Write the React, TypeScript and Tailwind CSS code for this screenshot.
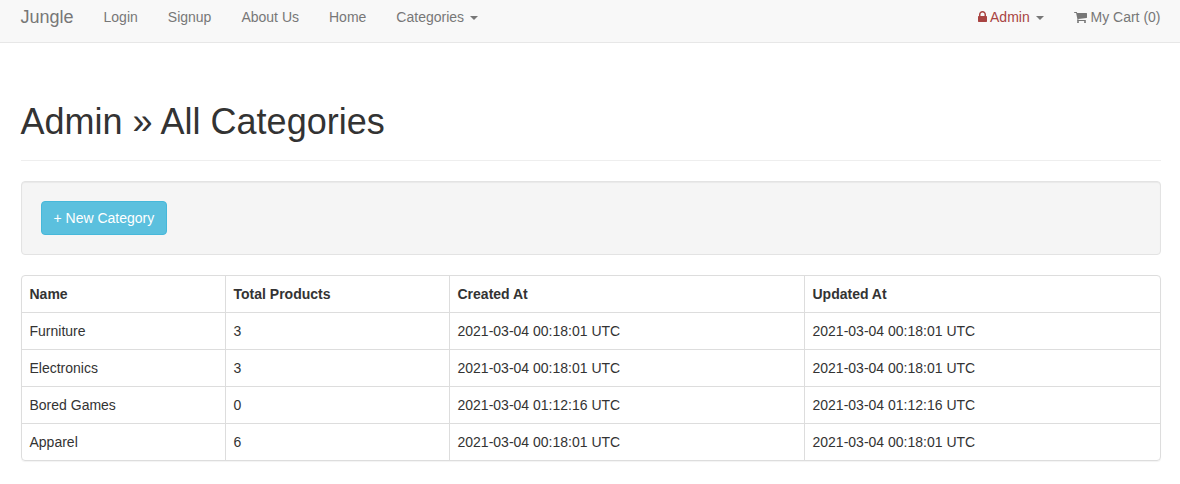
const rows = [
  ["Furniture", "3", "2021-03-04 00:18:01 UTC", "2021-03-04 00:18:01 UTC"],
  ["Electronics", "3", "2021-03-04 00:18:01 UTC", "2021-03-04 00:18:01 UTC"],
  ["Bored Games", "0", "2021-03-04 01:12:16 UTC", "2021-03-04 01:12:16 UTC"],
  ["Apparel", "6", "2021-03-04 00:18:01 UTC", "2021-03-04 00:18:01 UTC"],
];
const headers = ["Name", "Total Products", "Created At", "Updated At"];
const links = ["Login", "Signup", "About Us", "Home"];

function Caret() {
  return <span className="ml-0.5 inline-block border-x-4 border-t-4 border-x-transparent border-t-[#777] align-middle" />;
}

function LockIcon() {
  return (
    <svg viewBox="0 0 1152 1792" className="inline-block h-[14px] w-[9px] align-[-2px]" fill="currentColor">
      <path
        transform="matrix(1 0 0 -1 0 1536)"
        d="M320 768h512v192q0 106 -75 181t-181 75t-181 -75t-75 -181v-192zM1152 672v-576q0 -40 -28 -68t-68 -28h-960q-40 0 -68 28t-28 68v576q0 40 28 68t68 28h32v192q0 184 132 316t316 132t316 -132t132 -316v-192h32q40 0 68 -28t28 -68z"
      />
    </svg>
  );
}

function CartIcon() {
  return (
    <svg viewBox="0 0 1664 1792" className="inline-block h-[14px] w-[13px] align-[-2px]" fill="currentColor">
      <path
        transform="matrix(1 0 0 -1 0 1536)"
        d="M640 0q0 -52 -38 -90t-90 -38t-90 38t-38 90t38 90t90 38t90 -38t38 -90zM1536 0q0 -52 -38 -90t-90 -38t-90 38t-38 90t38 90t90 38t90 -38t38 -90zM1664 1088v-512q0 -24 -16.5 -42.5t-40.5 -21.5l-1044 -122q13 -60 13 -70q0 -16 -24 -64h920q26 0 45 -19t19 -45t-19 -45t-45 -19h-1024q-26 0 -45 19t-19 45q0 11 8 31.5t16 36t21.5 40t15.5 29.5l-177 823h-204q-26 0 -45 19t-19 45t19 45t45 19h256q16 0 28.5 -6.5t19.5 -15.5t13 -24.5t8 -26t5.5 -29.5t4.5 -26h1201q26 0 45 -19t19 -45z"
      />
    </svg>
  );
}

export default function App() {
  return (
    <div className="h-[484px] overflow-hidden bg-white font-['Liberation_Sans',Arial,sans-serif] text-sm leading-5 text-[#333]">
      <nav className="flex h-[43px] justify-between border-b border-[#e7e7e7] bg-[#f8f8f8] pt-[7px] pr-[19.5px] pl-[20.5px] text-[#777]">
        <div className="flex">
          <a className="mr-[15px] text-lg leading-5">Jungle</a>
          {links.map((l) => (
            <a key={l} className="px-[15px]">{l}</a>
          ))}
          <a className="px-[15px]">Categories <Caret /></a>
        </div>
        <div className="flex">
          <a className="px-[15px] text-[#a94442]">
            <LockIcon /> Admin <Caret />
          </a>
          <a className="pl-[15px]"><CartIcon /> My Cart (0)</a>
        </div>
      </nav>
      <main className="pr-[19.5px] pl-[20.5px]">
        <header className="mt-[59px] mb-5 border-b border-[#eee] pb-[19px]">
          <h1 className="text-4xl leading-[39px]">Admin » All Categories</h1>
        </header>
        <section className="mb-5 h-[74px] rounded border border-[#e3e3e3] bg-[#f5f5f5] p-[19px] shadow-[inset_0_1px_1px_rgba(0,0,0,0.05)]">
          <a className="inline-block rounded border border-[#46b8da] bg-[#5bc0de] px-3 py-1.5 text-white">+ New Category</a>
        </section>
        <section className="rounded border border-[#ddd] shadow-[0_1px_1px_rgba(0,0,0,0.05)]">
          {[headers, ...rows].map((row, i) => (
            <div key={i} className={i === 0 ? "grid h-9 grid-cols-[204px_224px_355px_1fr] font-bold" : "grid h-[37px] grid-cols-[204px_224px_355px_1fr] border-t border-[#ddd]"}>
              {row.map((c, j) => (
                <div key={j} className={j < 3 ? "border-r border-[#ddd] px-2 py-2" : "px-2 py-2"}>{c}</div>
              ))}
            </div>
          ))}
        </section>
      </main>
    </div>
  );
}
